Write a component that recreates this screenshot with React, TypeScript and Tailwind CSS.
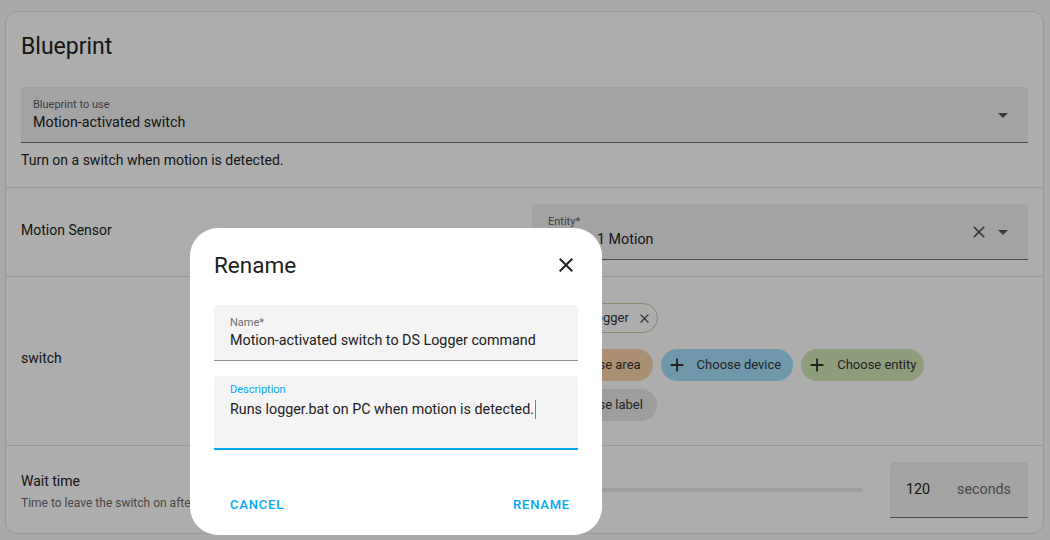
import React from "react";

const Plus = () => (
  <svg width="22" height="22" viewBox="0 0 24 24" className="shrink-0">
    <path d="M19 13h-6v6h-2v-6H5v-2h6V5h2v6h6v2z" fill="currentColor" />
  </svg>
);

const CloseIcon = ({ size = 24, className = "" }: { size?: number; className?: string }) => (
  <svg width={size} height={size} viewBox="0 0 24 24" className={className}>
    <path
      d="M19 6.41 17.59 5 12 10.59 6.41 5 5 6.41 10.59 12 5 17.59 6.41 19 12 13.41 17.59 19 19 17.59 13.41 12z"
      fill="currentColor"
    />
  </svg>
);

const Caret = () => (
  <svg width="24" height="24" viewBox="0 0 24 24" className="shrink-0">
    <path d="M7 10l5 5 5-5z" fill="currentColor" />
  </svg>
);

const MotionIcon = () => (
  <svg width="18" height="18" viewBox="0 0 24 24" className="shrink-0">
    <path
      d="M7 5h10v2h2V3a2 2 0 0 0-2-2H7a2 2 0 0 0-2 2v4h2V5m8.41 11.59L20 12l-4.59-4.59L14 8.83 17.17 12 14 15.17l1.41 1.42M10 15.17 6.83 12 10 8.830 8.59 7.41 4 12l4.590 4.59L10 15.17M17 19H7v-2H5v4a2 2 0 0 0 2 2h10a2 2 0 0 0 2-2v-4h-2v2z"
      fill="currentColor"
    />
  </svg>
);

export default function App() {
  return (
    <div className="relative h-[540px] w-[1050px] overflow-hidden bg-[#fafafa] font-['Roboto',sans-serif] text-[#212121]">
      <div className="pl-[5px] pt-[11px]">
        <div className="h-[523px] w-[1039px] overflow-hidden rounded-xl border border-[#e0e0e0] bg-white">
          {/* Header section */}
          <div className="px-[15px]">
            <div className="pt-[19px] text-[23px] leading-8">Blueprint</div>
            <div className="relative mt-6 flex h-[56px] items-start rounded-t border-b border-[#6b6b6b] bg-[#f1f1f1] pl-3 pr-[13px]">
              <div className="flex-1 pt-[10px]">
                <div className="text-[11px] leading-4 text-[#5c5c5c]">Blueprint to use</div>
                <div className="text-[14.3px] leading-[18px] text-[#212121]">Motion-activated switch</div>
              </div>
              <div className="flex h-full items-center text-[#555]">
                <Caret />
              </div>
            </div>
            <div className="mt-[7px] pb-[17px] text-[14px] leading-5">
              Turn on a switch when motion is detected.
            </div>
          </div>

          {/* Motion sensor row */}
          <div className="flex border-t border-[#e0e0e0] px-[15px] py-4">
            <div className="flex-1 pt-[16px] text-[14px] leading-5">Motion Sensor</div>
            <div className="relative flex h-[56px] w-[496px] items-start rounded-t border-b border-[#6b6b6b] bg-[#f1f1f1] pl-4 pr-[13px]">
              <div className="flex-1 pt-[10px]">
                <div className="text-[11px] leading-4 text-[#5c5c5c]">Entity*</div>
                <div className="text-[14.3px] leading-[18px] text-[#212121]">Garage 1 Motion</div>
              </div>
              <div className="flex h-full items-center gap-[2px] text-[#555]">
                <CloseIcon size={20} />
                <Caret />
              </div>
            </div>
          </div>

          {/* switch row */}
          <div className="flex border-t border-[#e0e0e0] px-[15px]">
            <div className="flex flex-1 items-center pb-[6px] text-[14px] leading-5">switch</div>
            <div className="w-[496px] pb-[24px] pt-[26px]">
              <div className="flex">
                <div className="flex h-[30px] items-center gap-2 rounded-full border border-[#b9d49c] pl-[10px] pr-[5px] text-[13px] text-[#333]">
                  <MotionIcon />
                  <span>DS Logger</span>
                  <CloseIcon size={15} className="text-[#555]" />
                </div>
              </div>
              <div className="mt-4 flex flex-wrap gap-x-2 gap-y-2">
                <div className="flex h-8 items-center gap-[9px] rounded-full bg-[#fbd4a6] pl-[5px] pr-3 text-[13px] text-[#333]">
                  <Plus />
                  <span>Choose area</span>
                </div>
                <div className="flex h-8 items-center gap-[9px] rounded-full bg-[#a5e0fd] pl-[5px] pr-3 text-[13px] text-[#333]">
                  <Plus />
                  <span>Choose device</span>
                </div>
                <div className="flex h-8 items-center gap-[9px] rounded-full bg-[#d2e7b4] pl-[5px] pr-[8px] text-[13px] text-[#333]">
                  <Plus />
                  <span>Choose entity</span>
                </div>
                <div className="flex h-8 items-center gap-[9px] rounded-full bg-[#e7e7e7] pl-[5px] pr-[14px] text-[13px] text-[#333]">
                  <Plus />
                  <span>Choose label</span>
                </div>
              </div>
            </div>
          </div>

          {/* Wait time row */}
          <div className="flex border-t border-[#e0e0e0] px-[15px] pb-[15px] pt-4">
            <div className="w-[400px] shrink-0 pt-[9px]">
              <div className="text-[14px] leading-5">Wait time</div>
              <div className="mt-1 whitespace-nowrap text-[12px] leading-4 text-[#6b6b6b]">
                Time to leave the switch on after last motion is detected.
              </div>
            </div>
            <div className="flex flex-1 items-center">
              <div className="flex flex-1 items-center pl-[20px] pr-[27px]">
                <div className="h-[4px] w-full rounded-full bg-[#ece6ee]" />
              </div>
              <div className="flex h-[56px] w-[138px] items-center justify-between rounded-t border-b border-[#6b6b6b] bg-[#f1f1f1] pl-4 pr-[17px] text-[14.3px]">
                <span className="text-[#212121]">120</span>
                <span className="text-[#6b6b6b]">seconds</span>
              </div>
            </div>
          </div>
        </div>
      </div>

      {/* Scrim */}
      <div className="absolute inset-0 bg-[rgba(0,0,0,0.32)]" />

      {/* Dialog */}
      <div className="absolute left-[190px] top-[228px] h-[307px] w-[412px] rounded-[28px] bg-white px-6">
        <div className="mt-[23px] flex h-[28px] items-center justify-between">
          <div className="text-[22.5px] leading-7 text-[#212121]">Rename</div>
          <CloseIcon size={24} className="text-[#212121]" />
        </div>
        <div className="mt-[26px] h-[56px] rounded-t border-b border-[#8e8e8e] bg-[#f4f4f4] px-4 pt-[10px]">
          <div className="text-[11px] leading-4 text-[#6b6b6b]">Name*</div>
          <div className="whitespace-nowrap text-[14.3px] leading-[18px] text-[#212121]">
            Motion-activated switch to DS Logger command
          </div>
        </div>
        <div className="mt-[15px] h-[74px] rounded-t border-b-2 border-[#03a9f4] bg-[#f4f4f4] px-4 pt-[6px]">
          <div className="text-[11px] leading-4 text-[#03a9f4]">Description</div>
          <div className="mt-px flex items-center whitespace-nowrap text-[14.3px] leading-5 text-[#212121]">
            <span>Runs logger.bat on PC when motion is detected.</span>
            <span className="ml-px inline-block h-[19px] w-px bg-[#03a9f4]" />
          </div>
        </div>
        <div className="mt-[37px] flex h-9 items-center justify-between">
          <div className="pl-4 text-[13px] font-medium tracking-[0.8px] text-[#03a9f4]">CANCEL</div>
          <div className="pr-2 text-[13px] font-medium tracking-[0.8px] text-[#03a9f4]">RENAME</div>
        </div>
      </div>
    </div>
  );
}
